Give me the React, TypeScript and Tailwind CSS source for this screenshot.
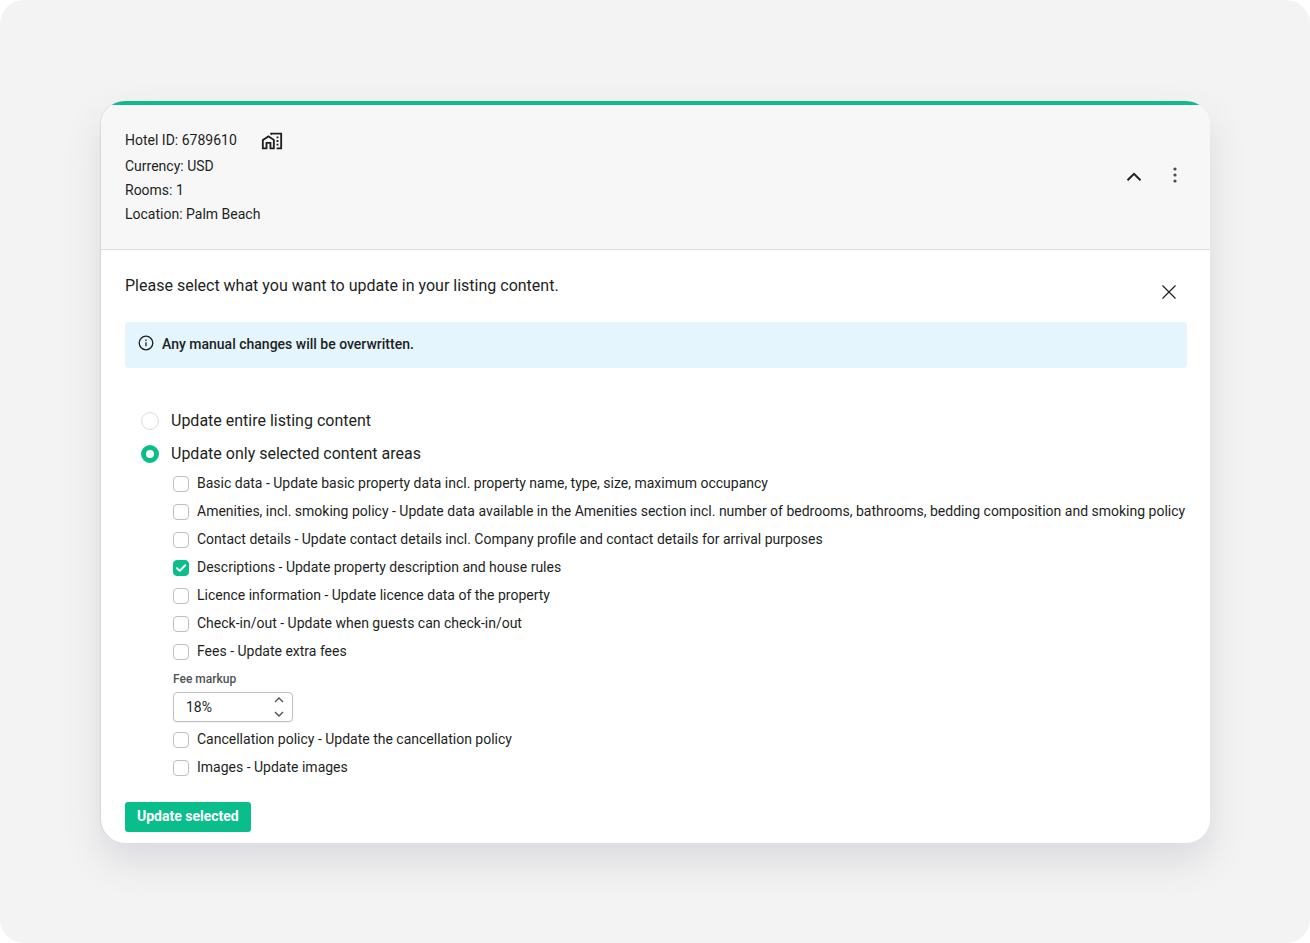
import { useState } from "react";

const areasBeforeMarkup = [
  { id: "basic", label: "Basic data - Update basic property data incl. property name, type, size, maximum occupancy" },
  {
    id: "amenities",
    label:
      "Amenities, incl. smoking policy - Update data available in the Amenities section incl. number of bedrooms, bathrooms, bedding composition and smoking policy",
  },
  { id: "contact", label: "Contact details - Update contact details incl. Company profile and contact details for arrival purposes" },
  { id: "descriptions", label: "Descriptions - Update property description and house rules" },
  { id: "licence", label: "Licence information - Update licence data of the property" },
  { id: "checkin", label: "Check-in/out - Update when guests can check-in/out" },
  { id: "fees", label: "Fees - Update extra fees" },
];

const areasAfterMarkup = [
  { id: "cancellation", label: "Cancellation policy - Update the cancellation policy" },
  { id: "images", label: "Images - Update images" },
];

function HomeWorkIcon() {
  return (
    <svg viewBox="0 0 24 24" className="mt-0.5 size-[22px]" fill="currentColor" aria-hidden="true">
      <path d="M17 15h2v2h-2zM17 11h2v2h-2zM17 7h2v2h-2z" />
      <path d="M10 3v1.51l2 1.33V5h9v14h-4v2h6V3H10z" />
      <path d="M8.17 5.7 1 10.48V21h6v-6h2.3v6H15V10.25L8.17 5.7zM13 19h-1.7v-6H5v6H3v-7.62l5.17-3.29L13 11.16V19z" />
    </svg>
  );
}

function AreaRow({ id, label, checked, onToggle }: { id: string; label: string; checked: boolean; onToggle: () => void }) {
  return (
    <div className="flex min-h-7 items-start gap-2">
      <span className="mt-1.5 grid size-4 shrink-0">
        <input
          id={id}
          type="checkbox"
          checked={checked}
          onChange={onToggle}
          className="col-start-1 row-start-1 size-4 appearance-none rounded border border-[#bfbfbf] bg-white checked:border-[#0abe8c] checked:bg-[#0abe8c]"
        />
        {checked && (
          <svg viewBox="0 0 16 16" className="pointer-events-none col-start-1 row-start-1 size-4" fill="none" stroke="#fff" strokeWidth="2" strokeLinecap="round" strokeLinejoin="round" aria-hidden="true">
            <path d="M4 8.2 6.8 10.9 12.2 5.2" />
          </svg>
        )}
      </span>
      <label htmlFor={id} className="pt-[3px] text-sm/5">
        {label}
      </label>
    </div>
  );
}

export default function App() {
  const [mode, setMode] = useState("selected");
  const [selected, setSelected] = useState<string[]>(["descriptions"]);
  const [markup, setMarkup] = useState(18);

  const toggle = (id: string) =>
    setSelected((s) => (s.includes(id) ? s.filter((x) => x !== id) : [...s, id]));

  const radioClass =
    "size-[18px] shrink-0 appearance-none rounded-full border border-[#dcdcdc] bg-white checked:border-[5px] checked:border-[#0abe8c]";

  return (
    <div className="bg-white font-['Roboto',sans-serif] text-[#1d1f23]">
      <main className="min-h-screen rounded-3xl bg-[#f3f3f3] px-[100px] pt-[101px] pb-[100px]">
        <section className="ml-px overflow-hidden rounded-3xl bg-white shadow-[0_18px_36px_rgba(80,82,115,0.15),-1px_0_0_rgba(0,0,0,0.08)]">
          <header className="flex items-center justify-between border-t-4 border-b border-t-[#10ba89] border-b-[#dedfe1] bg-[#f7f7f7] pt-[23px] pr-[25px] pb-[23px] pl-6">
            <div className="text-sm/6">
              <div className="flex items-center gap-6">
                <span>Hotel ID: 6789610</span>
                <HomeWorkIcon />
              </div>
              <p className="pt-0.5">Currency: USD</p>
              <p>Rooms: 1</p>
              <p>Location: Palm Beach</p>
            </div>
            <div className="mb-1 flex items-center gap-[21px]">
              <button type="button" aria-label="Collapse" className="pt-1">
                <svg viewBox="0 0 20 20" className="size-5" fill="none" stroke="#1d1f23" strokeWidth="2" aria-hidden="true">
                  <path d="m3.5 13.2 6.5-6.4 6.5 6.4" />
                </svg>
              </button>
              <button type="button" aria-label="More actions">
                <svg viewBox="0 0 20 20" className="size-5" fill="#4a4c50" aria-hidden="true">
                  <circle cx="10" cy="4" r="1.6" />
                  <circle cx="10" cy="10" r="1.6" />
                  <circle cx="10" cy="16" r="1.6" />
                </svg>
              </button>
            </div>
          </header>

          <div className="pt-6 pr-[23px] pb-[11px] pl-6">
            <div className="flex items-start justify-between">
              <h1 className="text-base/6">Please select what you want to update in your listing content.</h1>
              <button type="button" aria-label="Close" className="mt-2 mr-2">
                <svg viewBox="0 0 20 20" className="size-5" fill="none" stroke="#1d1f23" strokeWidth="1.2" aria-hidden="true">
                  <path d="m3.5 3.5 13 13m0-13-13 13" />
                </svg>
              </button>
            </div>

            <div role="note" className="mt-5 flex h-[46px] items-center gap-2 rounded bg-[#e4f5fd] px-[13px] pb-0.5 text-sm font-medium">
              <svg viewBox="0 0 16 16" className="mb-0.5 size-4" fill="none" stroke="#1d1f23" strokeWidth="1.3" aria-hidden="true">
                <circle cx="8" cy="8" r="6.8" />
                <path d="M8 7.3v4M8 4.5v1.4" />
              </svg>
              Any manual changes will be overwritten.
            </div>

            <form className="pt-9" onSubmit={(e) => e.preventDefault()}>
              <div className="flex flex-col pl-4">
                <div className="flex min-h-[33px] items-center gap-3">
                  <input id="entire" type="radio" name="mode" checked={mode === "entire"} onChange={() => setMode("entire")} className={radioClass} />
                  <label htmlFor="entire" className="text-base/6">Update entire listing content</label>
                </div>
                <div className="flex min-h-[33px] items-center gap-3">
                  <input id="only" type="radio" name="mode" checked={mode === "selected"} onChange={() => setMode("selected")} className={radioClass} />
                  <label htmlFor="only" className="text-base/6">Update only selected content areas</label>
                </div>
              </div>

              <div className="-mr-[23px] pl-12">
                {areasBeforeMarkup.map((a) => (
                  <AreaRow key={a.id} {...a} checked={selected.includes(a.id)} onToggle={() => toggle(a.id)} />
                ))}
                <label htmlFor="markup" className="block pt-[5px] text-xs/4 font-medium text-[#4c5456]">
                  Fee markup
                </label>
                <div className="mt-[5px] mb-1 flex h-[30px] w-[120px] items-center rounded border border-[#bfbfbf] bg-white pr-2 pl-3 shadow-[0_1px_2px_rgba(0,0,0,0.06)]">
                  <input
                    id="markup"
                    type="text"
                    inputMode="numeric"
                    value={`${markup}%`}
                    onChange={(e) => setMarkup(parseInt(e.target.value, 10) || 0)}
                    className="w-full min-w-0 flex-1 bg-transparent text-sm outline-none"
                  />
                  <div className="flex flex-col gap-1">
                    <button type="button" aria-label="Increase" onClick={() => setMarkup(markup + 1)}>
                      <svg viewBox="0 0 10 10" className="size-2.5" fill="none" stroke="#4c5456" strokeWidth="1.4" aria-hidden="true">
                        <path d="m1 7 4-4 4 4" />
                      </svg>
                    </button>
                    <button type="button" aria-label="Decrease" onClick={() => setMarkup(markup - 1)}>
                      <svg viewBox="0 0 10 10" className="size-2.5" fill="none" stroke="#4c5456" strokeWidth="1.4" aria-hidden="true">
                        <path d="m1 3 4 4 4-4" />
                      </svg>
                    </button>
                  </div>
                </div>
                {areasAfterMarkup.map((a) => (
                  <AreaRow key={a.id} {...a} checked={selected.includes(a.id)} onToggle={() => toggle(a.id)} />
                ))}
              </div>

              <button type="submit" className="mt-5 h-[30px] rounded-[3px] bg-[#0abe8c] px-3 pb-0.5 text-sm/5 font-bold text-white">
                Update selected
              </button>
            </form>
          </div>
        </section>
      </main>
    </div>
  );
}
